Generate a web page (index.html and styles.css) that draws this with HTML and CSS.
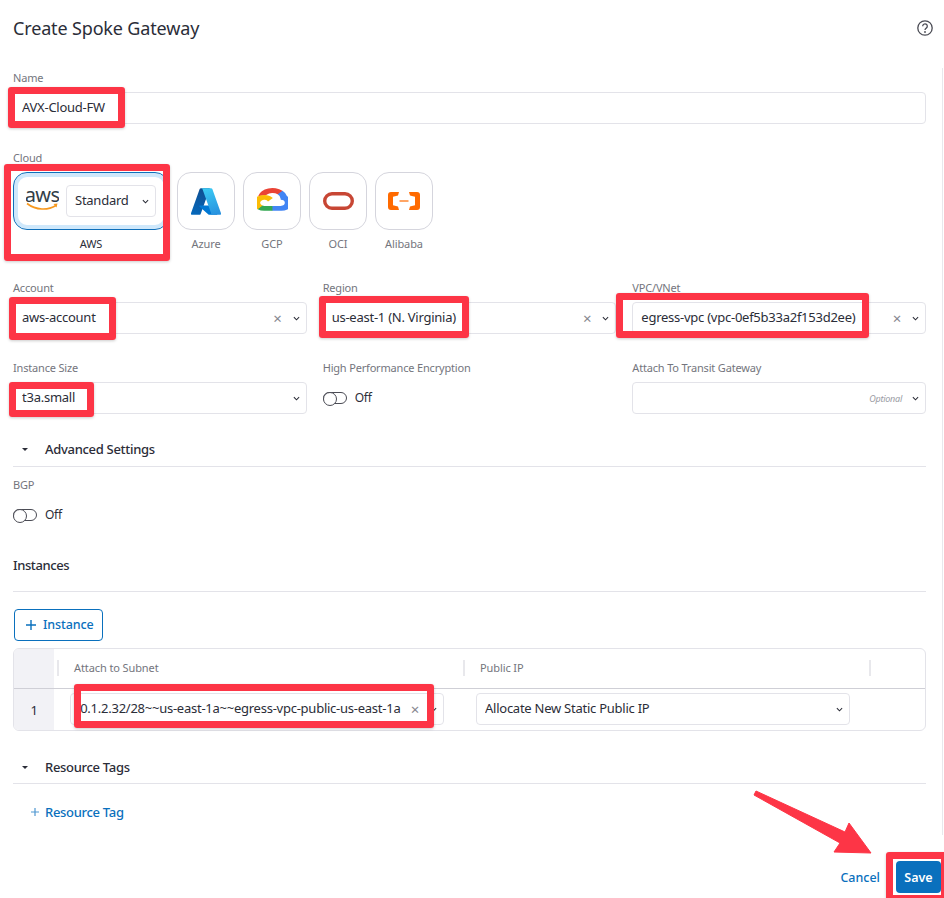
FILE: index.html
```html
<!DOCTYPE html>
<html lang="en">
<head>
    <meta charset="UTF-8">
    <meta name="viewport" content="width=device-width, initial-scale=1.0">
    <title>Create Spoke Gateway</title>
    <link rel="stylesheet" href="styles.css">
</head>
<body>
    <header class="page-header">
        <h1>Create Spoke Gateway</h1>
        <svg class="help-icon" viewBox="0 0 16 16" width="16" height="16">
            <circle cx="8" cy="8" r="7.2" fill="none" stroke="#4b4c55" stroke-width="1.3"/>
            <path d="M5.7 6.2a2.3 2.3 0 1 1 3.6 1.9C8.500 8.700 8 9.100 8 10" fill="none" stroke="#4b4c55" stroke-width="1.3"/>
            <circle cx="8" cy="12" r=".9" fill="#4b4c55"/>
        </svg>
    </header>

    <main class="form-scroll">
        <div class="field">
            <label class="field-label">Name</label>
            <div class="input"><span class="value">AVX-Cloud-FW</span></div>
        </div>

        <div class="field cloud-field">
            <label class="field-label">Cloud</label>
            <div class="cloud-list">
                <div class="cloud cloud-aws">
                    <div class="cloud-card cloud-card-active">
                        <svg class="aws-logo" viewBox="0 0 33 24" width="33" height="24">
                            <text x="16" y="13" text-anchor="middle" font-family="Noto Sans" font-size="20" letter-spacing="-.6" fill="#333e48">aws</text>
                            <path d="M1 14.500c9 7 21 7 29 2" fill="none" stroke="#f7981d" stroke-width="1.600"/>
                            <path d="M27.500 15l4-.6-1 4z" fill="#f7981d"/>
                        </svg>
                        <div class="input tier-select">
                            <span class="value">Standard</span>
                            <svg class="chevron" viewBox="0 0 8 5" width="7" height="5"><path d="M1 1l3 3 3-3" fill="none" stroke="#2b2d38" stroke-width="1.200"/></svg>
                        </div>
                    </div>
                    <span class="cloud-name cloud-name-active">AWS</span>
                </div>
                <div class="cloud">
                    <div class="cloud-card">
                        <svg viewBox="4 6 88 84" width="30" height="27" preserveAspectRatio="none">
                            <defs>
                                <linearGradient id="az-a" x1="60" y1="6" x2="10" y2="90" gradientUnits="userSpaceOnUse"><stop offset="0" stop-color="#114a8b"/><stop offset="1" stop-color="#0669bc"/></linearGradient>
                                <linearGradient id="az-b" x1="45" y1="6" x2="75" y2="88" gradientUnits="userSpaceOnUse"><stop offset="0" stop-color="#3ccbf4"/><stop offset="1" stop-color="#2892df"/></linearGradient>
                            </defs>
                            <path d="M33.338 6.544h26.038l-27.03 80.087a4.152 4.152 0 0 1-3.933 2.824H8.149a4.145 4.145 0 0 1-3.928-5.47L29.404 9.368a4.152 4.152 0 0 1 3.934-2.825z" fill="url(#az-a)"/>
                            <path d="M71.175 60.261h-41.29a1.911 1.911 0 0 0-1.305 3.309l26.532 24.764a4.171 4.171 0 0 0 2.846 1.121h23.38z" fill="#0078d4"/>
                            <path d="M66.595 9.364a4.145 4.145 0 0 0-3.928-2.82H33.648a4.146 4.146 0 0 1 3.928 2.82l25.184 74.62a4.146 4.146 0 0 1-3.928 5.472h29.02a4.146 4.146 0 0 0 3.927-5.472z" fill="url(#az-b)"/>
                        </svg>
                    </div>
                    <span class="cloud-name">Azure</span>
                </div>
                <div class="cloud">
                    <div class="cloud-card">
                        <svg class="gcp-logo" viewBox="0.6 1 22.5 22.6" width="31" height="23" preserveAspectRatio="none">
                            <path d="M15.600 7.200h.9l2.400-2.400.1-1A10.800 10.800 0 0 0 1.400 9c.3-.1.6-.1.8-.1l5-.8s.2-.4.4-.4a6 6 0 0 1 8-.5z" fill="#ea4335"/>
                            <path d="M22.400 9a10.800 10.800 0 0 0-3.300-5.200L15.600 7.200a6 6 0 0 1 2.200 4.800v.6a3 3 0 1 1 0 6h-6l-.6.6v3.600l.6.6h6A7.800 7.800 0 0 0 22.400 9z" fill="#4285f4"/>
                            <path d="M5.800 23.400h6v-4.800h-6a3 3 0 0 1-1.200-.3l-.9.3-2.400 2.400-.2.8a7.800 7.800 0 0 0 4.700 1.600z" fill="#34a853"/>
                            <path d="M5.800 7.800a7.800 7.800 0 0 0-4.700 14l3.500-3.500a3 3 0 1 1 4-4l3.500-3.500a7.800 7.800 0 0 0-6.300-3z" fill="#fbbc05"/>
                        </svg>
                    </div>
                    <span class="cloud-name">GCP</span>
                </div>
                <div class="cloud">
                    <div class="cloud-card">
                        <svg viewBox="0 0 31 18" width="31" height="18"><rect x="1.700" y="1.700" width="27.600" height="14.600" rx="7.300" fill="none" stroke="#c74634" stroke-width="3.400"/></svg>
                    </div>
                    <span class="cloud-name">OCI</span>
                </div>
                <div class="cloud">
                    <div class="cloud-card">
                        <svg viewBox="0 0 32 18" width="32" height="18">
                            <path d="M11 0H3Q0 0 0 3v12q0 3 3 3h8l-1-3.500-5-1.300V4.800l5-1.300z" fill="#ff6a00"/>
                            <path d="M21 0h8q3 0 3 3v12q0 3-3 3h-8l1-3.500 5-1.300V4.800l-5-1.300z" fill="#ff6a00"/>
                            <rect x="11.500" y="8.400" width="9" height="1.200" fill="#ff6a00"/>
                        </svg>
                    </div>
                    <span class="cloud-name">Alibaba</span>
                </div>
            </div>
        </div>

        <div class="field-grid">
            <div class="field">
                <label class="field-label">Account</label>
                <div class="input">
                    <span class="value">aws-account</span>
                    <span class="clear">&times;</span>
                    <svg class="chevron" viewBox="0 0 8 5" width="7" height="5"><path d="M1 1l3 3 3-3" fill="none" stroke="#2b2d38" stroke-width="1.200"/></svg>
                </div>
            </div>
            <div class="field">
                <label class="field-label">Region</label>
                <div class="input">
                    <span class="value">us-east-1 (N. Virginia)</span>
                    <span class="clear">&times;</span>
                    <svg class="chevron" viewBox="0 0 8 5" width="7" height="5"><path d="M1 1l3 3 3-3" fill="none" stroke="#2b2d38" stroke-width="1.200"/></svg>
                </div>
            </div>
            <div class="field">
                <label class="field-label">VPC/VNet</label>
                <div class="input">
                    <span class="value">egress-vpc (vpc-0ef5b33a2f153d2ee)</span>
                    <span class="clear">&times;</span>
                    <svg class="chevron" viewBox="0 0 8 5" width="7" height="5"><path d="M1 1l3 3 3-3" fill="none" stroke="#2b2d38" stroke-width="1.200"/></svg>
                </div>
            </div>
            <div class="field">
                <label class="field-label">Instance Size</label>
                <div class="input">
                    <span class="value">t3a.small</span>
                    <svg class="chevron" viewBox="0 0 8 5" width="7" height="5"><path d="M1 1l3 3 3-3" fill="none" stroke="#2b2d38" stroke-width="1.200"/></svg>
                </div>
            </div>
            <div class="field">
                <label class="field-label">High Performance Encryption</label>
                <div class="toggle-row"><span class="toggle"></span><span class="value">Off</span></div>
            </div>
            <div class="field">
                <label class="field-label">Attach To Transit Gateway</label>
                <div class="input">
                    <span class="optional">Optional</span>
                    <svg class="chevron" viewBox="0 0 8 5" width="7" height="5"><path d="M1 1l3 3 3-3" fill="none" stroke="#2b2d38" stroke-width="1.200"/></svg>
                </div>
            </div>
        </div>

        <div class="section-head section-advanced"><span class="caret"></span>Advanced Settings</div>
        <div class="field bgp-field">
            <label class="field-label">BGP</label>
            <div class="toggle-row"><span class="toggle"></span><span class="value">Off</span></div>
        </div>

        <div class="section-head section-instances">Instances</div>
        <button class="add-instance" type="button">
            <svg viewBox="0 0 10 10" width="10" height="10"><path d="M5 0v10M0 5h10" stroke="#0a70bd" stroke-width="1.400"/></svg>
            Instance
        </button>

        <div class="table">
            <div class="row-num head-num"></div>
            <div class="th"><span>Attach to Subnet</span></div>
            <div class="th"><span>Public IP</span></div>
            <div class="th"></div>
            <div class="row-num">1</div>
            <div class="td">
                <div class="input">
                    <span class="value"><span class="subnet-value">10.1.2.32/28~~us-east-1a~~egress-vpc-public-us-east-1a</span></span>
                    <span class="clear">&times;</span>
                    <svg class="chevron" viewBox="0 0 8 5" width="7" height="5"><path d="M1 1l3 3 3-3" fill="none" stroke="#2b2d38" stroke-width="1.200"/></svg>
                </div>
            </div>
            <div class="td">
                <div class="input">
                    <span class="value">Allocate New Static Public IP</span>
                    <svg class="chevron" viewBox="0 0 8 5" width="7" height="5"><path d="M1 1l3 3 3-3" fill="none" stroke="#2b2d38" stroke-width="1.200"/></svg>
                </div>
            </div>
            <div class="td"></div>
        </div>

        <div class="section-head section-tags"><span class="caret"></span>Resource Tags</div>
        <a class="add-tag" href="#">
            <svg viewBox="0 0 8 8" width="8" height="8"><path d="M4 0v8M0 4h8" stroke="#4f97d1" stroke-width="1.200"/></svg>
            Resource Tag
        </a>
    </main>

    <footer class="page-footer">
        <a class="cancel" href="#">Cancel</a>
        <button class="save" type="button">Save</button>
    </footer>

    <!-- red callouts drawn over the screenshot -->
    <div class="mark mark-name"></div>
    <div class="mark mark-cloud"></div>
    <div class="mark mark-account"></div>
    <div class="mark mark-region"></div>
    <div class="mark mark-vpc"></div>
    <div class="mark mark-size"></div>
    <div class="mark mark-subnet"></div>
    <div class="mark mark-save"></div>
    <svg class="arrow" viewBox="0 0 944 898" width="944" height="898">
        <path d="M756 791L845 832L849 823L871 853L834 852L840 843L754 795Z" fill="#fd3546" stroke="#fd3546" stroke-linejoin="round"/>
    </svg>
</body>
</html>
```

FILE: styles.css
```css
* {
    box-sizing: border-box;
}

html, body {
    height: 898px;
    overflow: hidden;
}

body {
    position: relative;
    margin: 0;
    background-color: #ffffff;
    color: #2b2d38;
    font-family: "Noto Sans", Arial, sans-serif;
    font-size: 13px;
    letter-spacing: -0.25px;
}

.page-header {
    display: flex;
    justify-content: space-between;
    align-items: center;
    height: 56px;
    padding: 0 11px 0 13px;
}

.page-header h1 {
    margin: 0;
    font-size: 18px;
    font-weight: 400;
    letter-spacing: -0.15px;
}

.form-scroll {
    width: 943px;
    height: 767px;
    margin-top: 12px;
    padding: 2px 16px 0 13px;
    border-right: 1px solid #e8e8ec;
    overflow: hidden;
}

.field-label {
    display: block;
    height: 16px;
    margin-bottom: 6px;
    color: #74757d;
    font-size: 11px;
    line-height: 16px;
    letter-spacing: -0.18px;
}

.input {
    display: flex;
    align-items: center;
    height: 32px;
    padding: 0 6px 0 8px;
    border: 1px solid #e3e3e9;
    border-radius: 4px;
    background: #ffffff;
}

.value {
    flex: 1;
    padding-bottom: 2px;
    white-space: nowrap;
    overflow: hidden;
}

.clear {
    margin-right: 11px;
    color: #85868e;
    font-size: 15px;
    line-height: 1;
}

.chevron {
    flex: none;
}

.optional {
    flex: 1;
    margin-right: 10px;
    color: #9a9ba3;
    font-size: 9px;
    font-style: italic;
    text-align: right;
}

.cloud-field {
    margin-top: 26px;
}

.cloud-list {
    display: flex;
    gap: 8px;
}

.cloud {
    display: flex;
    flex-direction: column;
    align-items: center;
    width: 58px;
}

.cloud-aws {
    width: 156px;
}

.cloud-card {
    display: flex;
    justify-content: center;
    align-items: center;
    width: 100%;
    height: 58px;
    border: 1px solid #d5d5dd;
    border-radius: 14px;
}

.cloud-card-active {
    justify-content: flex-start;
    gap: 7px;
    padding-left: 12px;
    border: 1px solid #0f6fba;
    box-shadow: inset 0 0 0 4px #cfe8fb;
}

.aws-logo {
    flex: none;
}

.gcp-logo {
    margin-bottom: 3px;
}

.tier-select {
    width: 90px;
}

.cloud-name {
    margin-top: 6px;
    color: #74757d;
    font-size: 11px;
    line-height: 16px;
    letter-spacing: -0.1px;
}

.cloud-name-active {
    color: #2b2d38;
}

.field-grid {
    display: grid;
    grid-template-columns: repeat(3, 1fr);
    gap: 26px 16px;
    margin-top: 28px;
}

.toggle-row {
    display: flex;
    align-items: center;
    gap: 8px;
    height: 32px;
}

.toggle-row .value {
    font-size: 12px;
}

.toggle {
    position: relative;
    width: 24px;
    height: 12px;
    border: 1px solid #4b4c55;
    border-radius: 6px;
}

.toggle::before {
    content: "";
    position: absolute;
    top: -1px;
    left: -1px;
    width: 12px;
    height: 12px;
    border: 1px solid #4b4c55;
    border-radius: 50%;
    background: #ffffff;
}

.section-head {
    display: flex;
    align-items: center;
    font-size: 13px;
    font-weight: 500;
    line-height: 20px;
    letter-spacing: -0.3px;
    border-bottom: 1px solid #e3e3e9;
}

.section-advanced {
    height: 27px;
    margin-top: 26px;
    padding: 0 0 8px 9px;
}

.section-instances {
    height: 37px;
    margin-top: 24px;
    padding-bottom: 16px;
    letter-spacing: -0.4px;
}

.section-tags {
    height: 27px;
    margin-top: 26px;
    padding: 0 0 6px 9px;
}

.caret {
    width: 0;
    height: 0;
    margin-right: 17px;
    border-top: 3px solid #2b2d38;
    border-left: 3px solid transparent;
    border-right: 3px solid transparent;
}

.bgp-field {
    margin-top: 10px;
}

.add-instance {
    display: flex;
    align-items: center;
    gap: 7px;
    width: 89px;
    height: 32px;
    margin: 17px 0 7px 1px;
    padding: 0 0 2px 11px;
    border: 1px solid #0a70bd;
    border-radius: 4px;
    background: #ffffff;
    color: #0a70bd;
    font-family: inherit;
    font-size: 12.500px;
    font-weight: 500;
    letter-spacing: -0.1px;
}

.add-instance svg {
    margin-top: 2px;
}

.table {
    display: grid;
    grid-template-columns: 40px 406px 406px 1fr;
    grid-template-rows: 40px 41px;
    border: 1px solid #e3e3e9;
    border-radius: 6px;
    overflow: hidden;
}

.row-num {
    display: flex;
    justify-content: center;
    align-items: center;
    background: #f2f2f6;
}

.head-num {
    border-bottom: 1px solid #cfcfd6;
}

.th {
    position: relative;
    display: flex;
    align-items: center;
    padding: 0 0 2px 20px;
    border-bottom: 1px solid #cfcfd6;
    color: #74757d;
    font-size: 11px;
    letter-spacing: -0.1px;
}

.th::before {
    content: "";
    position: absolute;
    top: 11px;
    left: 3px;
    width: 2px;
    height: 16px;
    background: #e8e8ec;
}

.td {
    padding: 4px 16px 0;
}

.subnet-value {
    margin-left: -6px;
}

.add-tag {
    display: inline-flex;
    align-items: center;
    gap: 6px;
    margin: 19px 0 0 18px;
    color: #0a70bd;
    font-size: 13px;
    font-weight: 500;
    text-decoration: none;
    letter-spacing: -0.3px;
}

.page-footer {
    display: flex;
    justify-content: flex-end;
    align-items: center;
    gap: 16px;
    margin-top: 26px;
    padding-right: 3px;
}

.cancel {
    color: #0a70bd;
    font-size: 12.500px;
    font-weight: 500;
    text-decoration: none;
    letter-spacing: 0;
}

.save {
    width: 45px;
    height: 32px;
    padding: 0;
    border: none;
    border-radius: 4px;
    background: #0a70bd;
    color: #ffffff;
    font-family: inherit;
    font-size: 12.500px;
    font-weight: 600;
}

/* callouts */
.mark {
    position: absolute;
    border: 7px solid #fd3546;
    border-radius: 3px;
    box-shadow: 0 1px 3px rgba(0, 0, 0, 0.2);
}

.mark-name { left: 8px; top: 87px; width: 117px; height: 41px; }
.mark-cloud { left: 4px; top: 164px; width: 166px; height: 97px; }
.mark-account { left: 9px; top: 297px; width: 107px; height: 43px; }
.mark-region { left: 319px; top: 296px; width: 150px; height: 42px; }
.mark-vpc { left: 616px; top: 293px; width: 253px; height: 45px; }
.mark-size { left: 9px; top: 382px; width: 85px; height: 35px; }
.mark-subnet { left: 74px; top: 684px; width: 360px; height: 44px; }
.mark-save { left: 886px; top: 852px; width: 62px; height: 50px; }

.arrow {
    position: absolute;
    top: 0;
    left: 0;
}
```
